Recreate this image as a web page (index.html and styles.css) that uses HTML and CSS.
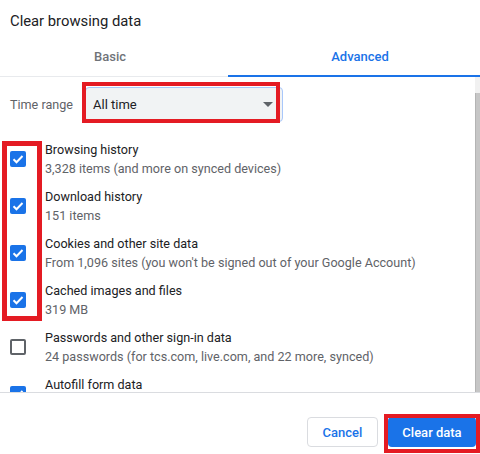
FILE: index.html
```html
<!DOCTYPE html>
<html lang="en">
<head>
  <meta charset="UTF-8" />
  <meta name="viewport" content="width=device-width, initial-scale=1.0" />
  <title>Clear browsing data</title>
  <link rel="stylesheet" href="styles.css">
</head>
<body>
  <div class="dialog">
    <div class="title">Clear browsing data</div>

    <div class="tabs">
      <div class="tab tab-basic">Basic</div>
      <div class="tab tab-advanced active">Advanced</div>
    </div>

    <div class="body">
      <div class="content">
        <div class="range-row">
          <span class="range-label">Time range</span>
          <div class="select">
            <span>All time</span>
            <span class="arrow"></span>
          </div>
        </div>

        <div class="item">
          <span class="check on"><svg viewBox="0 0 16 16"><path d="M3.5 8.2l3 3 6-6.2" /></svg></span>
          <div class="item-text">
            <div class="item-name">Browsing history</div>
            <div class="item-sub">3,328 items (and more on synced devices)</div>
          </div>
        </div>
        <div class="item">
          <span class="check on"><svg viewBox="0 0 16 16"><path d="M3.5 8.2l3 3 6-6.2" /></svg></span>
          <div class="item-text">
            <div class="item-name">Download history</div>
            <div class="item-sub">151 items</div>
          </div>
        </div>
        <div class="item">
          <span class="check on"><svg viewBox="0 0 16 16"><path d="M3.5 8.2l3 3 6-6.2" /></svg></span>
          <div class="item-text">
            <div class="item-name">Cookies and other site data</div>
            <div class="item-sub">From 1,096 sites (you won't be signed out of your Google Account)</div>
          </div>
        </div>
        <div class="item">
          <span class="check on"><svg viewBox="0 0 16 16"><path d="M3.5 8.2l3 3 6-6.2" /></svg></span>
          <div class="item-text">
            <div class="item-name">Cached images and files</div>
            <div class="item-sub">319 MB</div>
          </div>
        </div>
        <div class="item">
          <span class="check"></span>
          <div class="item-text">
            <div class="item-name">Passwords and other sign-in data</div>
            <div class="item-sub">24 passwords (for tcs.com, live.com, and 22 more, synced)</div>
          </div>
        </div>
        <div class="item">
          <span class="check on"><svg viewBox="0 0 16 16"><path d="M3.5 8.2l3 3 6-6.2" /></svg></span>
          <div class="item-text">
            <div class="item-name">Autofill form data</div>
            <div class="item-sub">&nbsp;</div>
          </div>
        </div>
      </div>
      <div class="scrollbar"><div class="thumb"></div></div>
    </div>

    <div class="footer">
      <button class="btn btn-cancel">Cancel</button>
      <button class="btn btn-clear">Clear data</button>
    </div>
  </div>

  <!-- red highlight boxes drawn over the dialog -->
  <div class="mark mark-range"></div>
  <div class="mark mark-checks"></div>
  <div class="mark mark-clear"></div>
</body>
</html>
```

FILE: styles.css
```css
* {
  box-sizing: border-box;
  margin: 0;
  padding: 0;
  font-family: Roboto, "Liberation Sans", Arial, sans-serif;
}
body {
  background: #fff;
  width: 480px;
  height: 454px;
  overflow: hidden;
  position: relative;
}
.dialog {
  display: flex;
  flex-direction: column;
  height: 454px;
}
.title {
  height: 37px;
  padding: 12px 0 0 10px;
  font-size: 14.8px;
  color: #202124;
  line-height: 18px;
}
.tabs {
  display: flex;
  height: 40px;
  border-bottom: 1px solid #e8eaed;
}
.tab {
  display: flex;
  align-items: center;
  justify-content: center;
  font-size: 13px;
  font-weight: 500;
  color: #6f7378;
}
.tab-basic {
  width: 228px;
  padding-right: 8px;
}
.tab-advanced {
  flex: 1;
  padding-left: 12px;
}
.tab.active {
  color: #1a73e8;
  border-bottom: 2px solid #1a73e8;
  margin-bottom: -1px;
}
.body {
  display: flex;
  height: 316px;
  border-bottom: 1px solid #dadce0;
}
.content {
  flex: 1;
  overflow: hidden;
}
.scrollbar {
  width: 5px;
  background: #f1f1f1;
  padding-top: 16px;
}
.scrollbar .thumb {
  height: 100%;
  background: #c6c6c6;
  border-left: 1px solid #b4b4b4;
}
.range-row {
  display: flex;
  align-items: center;
  padding: 10px 0 15px 10px;
}
.range-label {
  font-size: 12.6px;
  color: #5f6368;
  width: 75px;
}
.select {
  width: 198px;
  height: 35px;
  background: #f1f3f4;
  border: 1px solid #a8c7fa;
  border-radius: 4px;
  display: flex;
  align-items: center;
  justify-content: space-between;
  padding: 0 9px 0 7px;
  font-size: 13px;
  color: #202124;
}
.arrow {
  width: 0;
  height: 0;
  border-left: 5px solid transparent;
  border-right: 5px solid transparent;
  border-top: 5px solid #5f6368;
}
.item {
  display: flex;
  align-items: center;
  height: 47px;
  padding: 3px 0 6px 10px;
}
.check {
  width: 16px;
  height: 16px;
  border: 2px solid #5f6368;
  border-radius: 2px;
  margin-right: 19px;
  flex-shrink: 0;
}
.check.on {
  background: #1a73e8;
  border-color: #1a73e8;
  border-width: 0;
}
.check svg {
  display: block;
  width: 16px;
  height: 16px;
  fill: none;
  stroke: #fff;
  stroke-width: 2;
}
.item-name,
.item-sub {
  font-size: 12.6px;
  line-height: 19px;
  white-space: nowrap;
}
.item-name {
  color: #202124;
}
.item-sub {
  color: #5f6368;
}
.footer {
  flex: 1;
  display: flex;
  justify-content: flex-end;
  align-items: flex-start;
  gap: 10px;
  padding: 24px 4px 0 0;
}
.btn {
  height: 30px;
  border-radius: 4px;
  font-size: 13px;
  font-weight: 500;
}
.btn-cancel {
  width: 71px;
  background: #fff;
  color: #1a73e8;
  border: 1px solid #dadce0;
}
.btn-clear {
  width: 88px;
  background: #1a73e8;
  color: #fff;
  border: none;
}
.mark {
  position: absolute;
  border: 4px solid #e41b23;
}
.mark-range {
  left: 82px;
  top: 82px;
  width: 198px;
  height: 41px;
}
.mark-checks {
  left: 2px;
  top: 141px;
  width: 40px;
  height: 180px;
  border-width: 5px;
}
.mark-clear {
  left: 384px;
  top: 414px;
  width: 96px;
  height: 39px;
}
```
